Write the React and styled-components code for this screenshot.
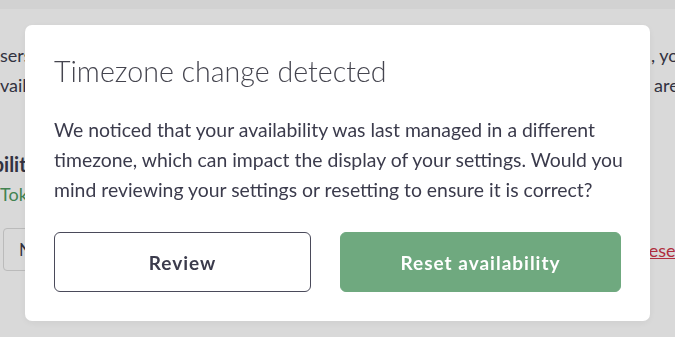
import React from "react";
import styled, { createGlobalStyle } from "styled-components";

const GlobalStyle = createGlobalStyle`
  html, body {
    margin: 0;
    padding: 0;
    overflow: hidden;
  }
  body {
    font-family: Lato, "Open Sans", sans-serif;
    color: #3b3b4c;
    background: #ffffff;
  }
`;

const Styled = {
  page: styled.div`
    width: 675px;
    height: 337px;
    overflow: hidden;
    display: flex;
    flex-flow: column;
  `,
  topbar: styled.div`
    height: 9px;
    background-color: #f7f7f7;
    flex-shrink: 0;
  `,
  intro: styled.div`
    display: flex;
    flex-flow: column;
    padding-top: 31px;
  `,
  introLine: styled.div`
    display: grid;
    grid-template-columns: ${(p) => p.$split}px max-content;
    font-size: 18px;
    line-height: 30px;
    white-space: nowrap;
  `,
  clip: styled.span`
    overflow: hidden;
  `,
  heading: styled.div`
    margin-top: 51px;
    font-size: 20px;
    font-weight: 700;
    line-height: 26px;
    margin-left: -61px;
    white-space: nowrap;
  `,
  zone: styled.div`
    margin-top: 4px;
    font-size: 18px;
    color: #4e9a5f;
    line-height: 26px;
    white-space: nowrap;
  `,
  controls: styled.div`
    margin-top: 21px;
    display: grid;
    grid-template-columns: 1fr max-content;
    align-items: center;
    padding-left: 3px;
  `,
  select: styled.div`
    width: 180px;
    height: 43px;
    box-sizing: border-box;
    border: 1px solid #dcdcdc;
    border-radius: 4px;
    display: flex;
    align-items: center;
    padding-left: 15px;
    font-size: 17px;
  `,
  resetLink: styled.span`
    font-size: 18px;
    color: #d0364a;
    text-decoration: underline;
    margin-right: -14px;
    width: 51px;
  `,
  overlay: styled.div`
    position: fixed;
    inset: 0;
    background-color: rgba(0, 0, 0, 0.15);
    display: flex;
    justify-content: center;
    align-items: flex-start;
    padding-top: 25px;
  `,
  modal: styled.div`
    width: 625px;
    box-sizing: border-box;
    padding: 29px;
    background-color: #ffffff;
    border-radius: 7px;
    box-shadow: 0 2px 8px rgba(0, 0, 0, 0.06);
  `,
  title: styled.h2`
    margin: 0;
    font-size: 28.6px;
    font-weight: 300;
    line-height: 34px;
    color: #45454f;
  `,
  text: styled.p`
    margin: 27px 0 0;
    font-size: 19.4px;
    line-height: 30px;
    color: #3b3b4c;
    white-space: nowrap;
  `,
  actions: styled.div`
    margin-top: 27px;
    display: grid;
    grid-template-columns: 257px 281px;
    justify-content: space-between;
  `,
  button: styled.button`
    height: 60px;
    border-radius: 6px;
    font-family: Lato, "Open Sans", sans-serif;
    font-size: 19px;
    font-weight: 700;
    letter-spacing: 1px;
    cursor: pointer;
    border: 1px solid ${(p) => (p.$primary ? "#6fa97f" : "#4a4a5a")};
    background-color: ${(p) => (p.$primary ? "#6fa97f" : "#ffffff")};
    color: ${(p) => (p.$primary ? "#ffffff" : "#3b3b4c")};
  `,
};

export default function App() {
  return (
    <>
      <GlobalStyle />
      <Styled.page>
        <Styled.topbar />
        <Styled.intro>
          <Styled.introLine $split={651}>
            <Styled.clip>sers are able to book meetings based on the hours below</Styled.clip>
            <span>, you can</span>
          </Styled.introLine>
          <Styled.introLine $split={654}>
            <Styled.clip>vailability settings apply to every event type unless they</Styled.clip>
            <span>are</span>
          </Styled.introLine>
        </Styled.intro>
        <Styled.heading>Availability</Styled.heading>
        <Styled.zone>Tokyo</Styled.zone>
        <Styled.controls>
          <Styled.select>None</Styled.select>
          <Styled.resetLink>Reset</Styled.resetLink>
        </Styled.controls>
      </Styled.page>
      <Styled.overlay>
        <Styled.modal>
          <Styled.title>Timezone change detected</Styled.title>
          <Styled.text>
            We noticed that your availability was last managed in a different
            <br />
            timezone, which can impact the display of your settings. Would you
            <br />
            mind reviewing your settings or resetting to ensure it is correct?
          </Styled.text>
          <Styled.actions>
            <Styled.button>Review</Styled.button>
            <Styled.button $primary>Reset availability</Styled.button>
          </Styled.actions>
        </Styled.modal>
      </Styled.overlay>
    </>
  );
}
